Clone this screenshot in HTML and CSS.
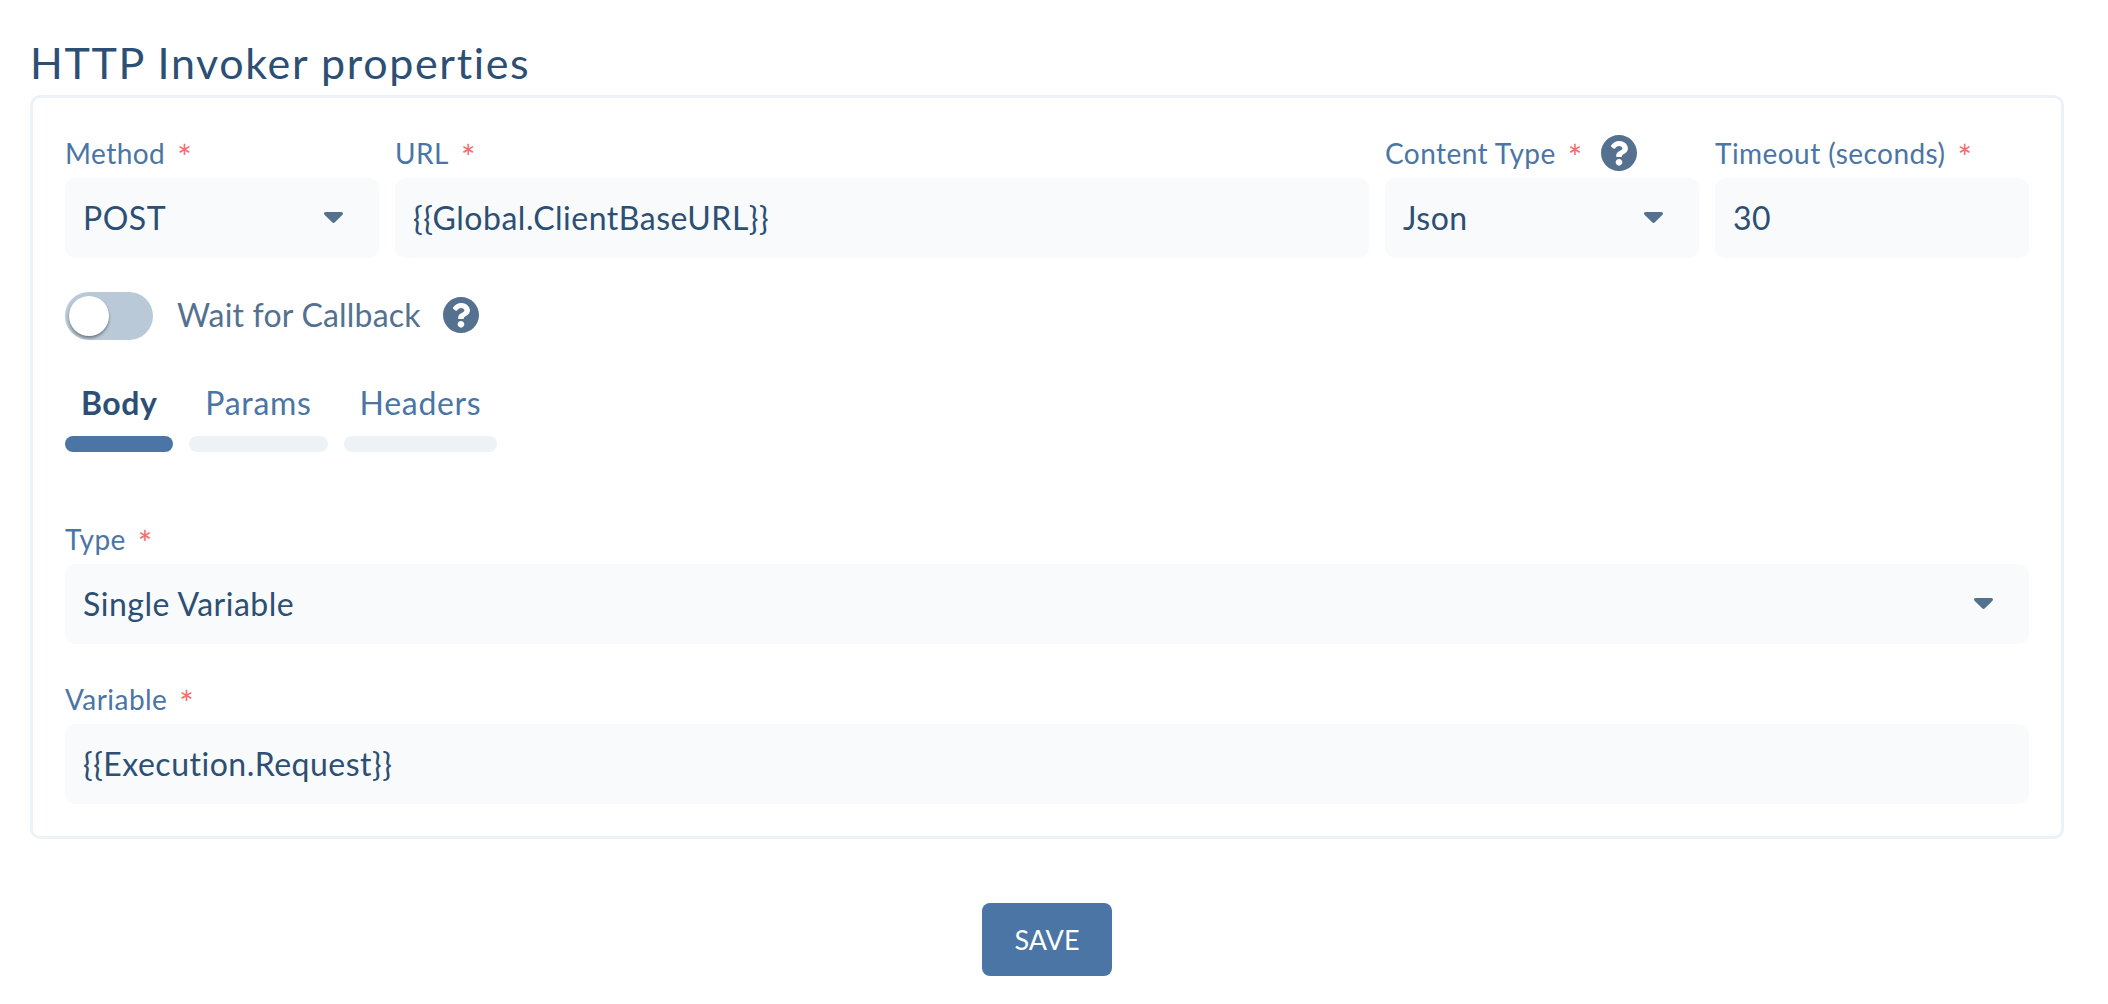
FILE: index.html
```html
<!DOCTYPE html>
<html lang="en">
<head>
<meta charset="utf-8">
<title>HTTP Invoker properties</title>
<link rel="stylesheet" href="styles.css">
</head>
<body>
<svg class="sprite" width="0" height="0" aria-hidden="true">
  <symbol id="help" viewBox="8 8 496 496"><path d="M504 256c0 136.997-111.043 248-248 248S8 392.997 8 256C8 119.083 119.043 8 256 8s248 111.083 248 248zM262.655 90c-54.497 0-89.255 22.957-116.549 63.758-3.536 5.286-2.353 12.415 2.715 16.258l34.699 26.31c5.205 3.947 12.621 3.008 16.665-2.122 17.864-22.658 30.113-35.797 57.303-35.797 20.429 0 45.698 13.148 45.698 32.958 0 14.976-12.363 22.667-32.534 33.976C247.128 238.528 216 254.941 216 296v4c0 6.627 5.373 12 12 12h56c6.627 0 12-5.373 12-12v-1.333c0-28.462 83.186-29.647 83.186-106.667 0-58.002-60.165-102-116.531-102zM256 338c-25.365 0-46 20.635-46 46 0 25.364 20.635 46 46 46s46-20.636 46-46c0-25.365-20.635-46-46-46z"/></symbol>
  <symbol id="caret" viewBox="0 0 19 11"><path d="M1.6 0h15.8c1.4 0 2.1 1.7 1.1 2.7l-7.9 7.8c-.6.6-1.6.6-2.2 0L.5 2.7C-.5 1.7.2 0 1.6 0z"/></symbol>
</svg>
<main class="page">
  <h1 class="title">HTTP Invoker properties</h1>
  <section class="card">
    <div class="row">
      <div class="field span-2">
        <div class="label">Method<span class="req">*</span></div>
        <div class="control">POST<svg class="caret"><use href="#caret"/></svg></div>
      </div>
      <div class="field span-6">
        <div class="label">URL<span class="req">*</span></div>
        <div class="control">{{Global.ClientBaseURL}}</div>
      </div>
      <div class="field span-2">
        <div class="label">Content Type<span class="req">*</span><svg class="help help-label"><use href="#help"/></svg></div>
        <div class="control">Json<svg class="caret"><use href="#caret"/></svg></div>
      </div>
      <div class="field span-2">
        <div class="label">Timeout (seconds)<span class="req">*</span></div>
        <div class="control">30</div>
      </div>
    </div>
    <div class="toggle-row">
      <span class="switch"><span class="knob"></span></span>
      <span class="toggle-text">Wait for Callback</span>
      <svg class="help help-toggle"><use href="#help"/></svg>
    </div>
    <div class="tabs">
      <div class="tab tab-active"><span class="tab-text">Body</span><span class="tab-bar"></span></div>
      <div class="tab"><span class="tab-text">Params</span><span class="tab-bar"></span></div>
      <div class="tab"><span class="tab-text">Headers</span><span class="tab-bar"></span></div>
    </div>
    <div class="field type-field">
      <div class="label">Type<span class="req">*</span></div>
      <div class="control">Single Variable<svg class="caret"><use href="#caret"/></svg></div>
    </div>
    <div class="field variable-field">
      <div class="label">Variable<span class="req">*</span></div>
      <div class="control">{{Execution.Request}}</div>
    </div>
  </section>
  <div class="actions"><button class="save" type="button">SAVE</button></div>
</main>
</body>
</html>
```
FILE: styles.css
```css
* { box-sizing: border-box; }
html, body { margin: 0; background: #fff; }
body { font-family: "Lato", "Noto Sans", sans-serif; color: #2c4f73; }
.sprite { position: absolute; }
.page { padding: 36px 44px 28px 30px; }
.title { margin: 0 0 3px; padding-bottom: 2px; height: 56px; font-size: 43px; line-height: 54px; font-weight: 400; color: #2c4f73; letter-spacing: 1.65px; }
.card { border: 3px solid #edf2f7; border-radius: 10px; padding: 32px; background: #fff; }
.row { display: grid; grid-template-columns: repeat(12, 1fr); column-gap: 16px; }
.span-2 { grid-column: span 2; }
.span-6 { grid-column: span 6; }
.label { display: flex; align-items: center; height: 48px; padding-bottom: 2px; font-size: 28px; letter-spacing: .45px; color: #4a75a5; white-space: nowrap; }
.req { margin: 8px 0 0 12px; font-size: 34px; line-height: 1; color: #f56c6c; letter-spacing: 0; }
.control { display: flex; align-items: center; justify-content: space-between; height: 80px; padding: 0 36px 2px 18px; border-radius: 10px; background: #f8fafc; font-size: 32px; letter-spacing: .5px; color: #2c4f73; }
.caret { width: 19px; height: 11px; fill: #54728f; }
.help { width: 36px; height: 36px; fill: #54728f; flex: none; }
.help-label { margin-left: 19px; }
.help-toggle { margin-bottom: 2px; }
.toggle-row { display: flex; align-items: center; margin-top: 34px; }
.switch { display: block; width: 88px; height: 48px; padding: 4px; border-radius: 24px; background: #b9c9d8; }
.knob { display: block; width: 40px; height: 40px; border-radius: 50%; background: #fff; box-shadow: 0 2px 3px rgba(0,0,0,.4); }
.toggle-text { margin: 0 22px 0 24px; padding-bottom: 3px; font-size: 32px; letter-spacing: .2px; color: #54728f; }
.tabs { display: flex; gap: 16px; margin-top: 39px; }
.tab { display: flex; flex-direction: column; align-items: stretch; }
.tab-text { height: 48px; line-height: 48px; padding: 0 16px; font-size: 32px; letter-spacing: .7px; color: #4a75a5; text-align: center; }
.tab-bar { display: block; height: 16px; margin-top: 9px; border-radius: 8px; background: #edf2f7; }
.tab-active .tab-text { font-weight: 700; letter-spacing: .5px; color: #2c4f73; }
.tab-active .tab-bar { background: #4a75a5; }
.type-field { margin-top: 64px; }
.variable-field { margin-top: 32px; }
.actions { display: flex; justify-content: center; margin-top: 64px; }
.save { width: 130px; height: 73px; border: 0; border-radius: 8px; background: #4a75a5; color: #fff; font: 400 27px "Lato", sans-serif; }
```
